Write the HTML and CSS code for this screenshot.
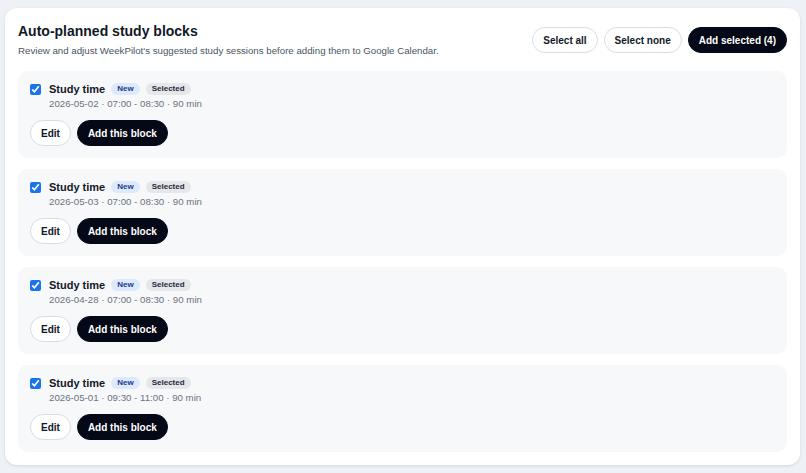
FILE: index.html
```html
<!DOCTYPE html>
<html lang="en">
<head>
    <meta charset="UTF-8">
    <title>Auto-planned study blocks</title>
    <link rel="stylesheet" href="styles.css">
</head>
<body>
    <section class="panel">
        <div class="panel-head">
            <div>
                <h2>Auto-planned study blocks</h2>
                <p class="sub">Review and adjust WeekPilot's suggested study sessions before adding them to Google Calendar.</p>
            </div>
            <div class="actions">
                <button class="btn">Select all</button>
                <button class="btn">Select none</button>
                <button class="btn dark">Add selected (4)</button>
            </div>
        </div>

        <div class="block">
            <div class="block-top">
                <input type="checkbox" checked>
                <span class="name">Study time</span>
                <span class="tag new">New</span>
                <span class="tag sel">Selected</span>
            </div>
            <div class="when">2026-05-02 · 07:00 - 08:30 · 90 min</div>
            <div class="row">
                <button class="btn">Edit</button>
                <button class="btn dark">Add this block</button>
            </div>
        </div>

        <div class="block">
            <div class="block-top">
                <input type="checkbox" checked>
                <span class="name">Study time</span>
                <span class="tag new">New</span>
                <span class="tag sel">Selected</span>
            </div>
            <div class="when">2026-05-03 · 07:00 - 08:30 · 90 min</div>
            <div class="row">
                <button class="btn">Edit</button>
                <button class="btn dark">Add this block</button>
            </div>
        </div>

        <div class="block">
            <div class="block-top">
                <input type="checkbox" checked>
                <span class="name">Study time</span>
                <span class="tag new">New</span>
                <span class="tag sel">Selected</span>
            </div>
            <div class="when">2026-04-28 · 07:00 - 08:30 · 90 min</div>
            <div class="row">
                <button class="btn">Edit</button>
                <button class="btn dark">Add this block</button>
            </div>
        </div>

        <div class="block">
            <div class="block-top">
                <input type="checkbox" checked>
                <span class="name">Study time</span>
                <span class="tag new">New</span>
                <span class="tag sel">Selected</span>
            </div>
            <div class="when">2026-05-01 · 09:30 - 11:00 · 90 min</div>
            <div class="row">
                <button class="btn">Edit</button>
                <button class="btn dark">Add this block</button>
            </div>
        </div>
    </section>
</body>
</html>
```

FILE: styles.css
```css
body {
    margin: 0;
    padding: 8px 6px 8px 5px;
    background: #eef1f6;
    font-family: "Liberation Sans", Arial, sans-serif;
    color: #111827;
}
.panel {
    background: #fff;
    border-radius: 12px;
    box-shadow: 0 1px 3px rgba(15, 23, 42, 0.12);
    padding: 13px 13px 13px;
    display: flex;
    flex-direction: column;
    gap: 11px;
}
.panel-head {
    display: flex;
    justify-content: space-between;
    align-items: flex-start;
    margin-bottom: 2px;
}
.panel-head h2 {
    margin: 1px 0 4px;
    font-size: 14px;
    line-height: 18px;
    font-weight: 700;
}
.sub {
    margin: 0;
    font-size: 9.7px;
    line-height: 14px;
    color: #4b5563;
}
.actions {
    display: flex;
    gap: 6px;
    margin-top: 6px;
}
.btn {
    font-family: inherit;
    font-size: 10px;
    font-weight: 700;
    height: 26px;
    padding: 0 10px;
    border-radius: 13px;
    border: 1px solid #d9dde3;
    background: #fff;
    color: #111827;
}
.btn.dark {
    background: #050816;
    border-color: #050816;
    color: #fff;
}
.block {
    background: #f7f8fa;
    border-radius: 10px;
    padding: 11px 12px 12px;
}
.block-top {
    display: flex;
    align-items: center;
    gap: 6px;
    height: 14px;
}
.block-top input {
    margin: 0 2px 0 0;
    width: 11px;
    height: 11px;
    accent-color: #1a73e8;
}
.name {
    font-size: 11px;
    font-weight: 700;
}
.tag {
    font-size: 8px;
    line-height: 10px;
    font-weight: 700;
    padding: 1px 6px;
    border-radius: 6px;
}
.tag.new {
    background: #dde9fd;
    color: #1e3a8a;
}
.tag.sel {
    background: #e5e7eb;
    color: #1f2937;
}
.when {
    margin: 2px 0 10px 19px;
    font-size: 9.7px;
    line-height: 12px;
    color: #6b7280;
}
.row {
    display: flex;
    gap: 6px;
}
```
